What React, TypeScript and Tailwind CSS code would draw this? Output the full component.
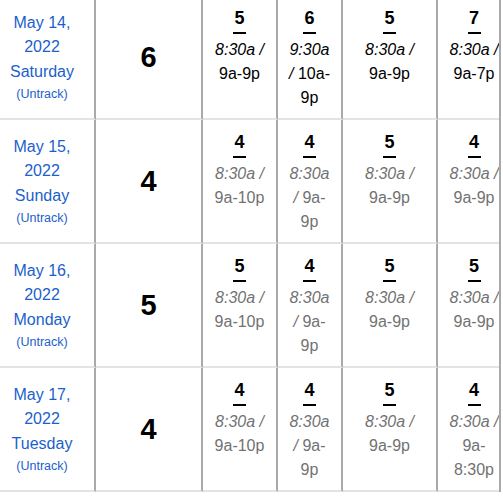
type Slot = { n: number; start: string; hours: string };

type Row = { date: string; year: string; day: string; count: number; slots: Slot[] };

const rows: Row[] = [
  {
    date: "May 14,",
    year: "2022",
    day: "Saturday",
    count: 6,
    slots: [
      { n: 5, start: "8:30a /", hours: "9a-9p" },
      { n: 6, start: "9:30a /", hours: "10a-9p" },
      { n: 5, start: "8:30a /", hours: "9a-9p" },
      { n: 7, start: "8:30a /", hours: "9a-7p" },
    ],
  },
  {
    date: "May 15,",
    year: "2022",
    day: "Sunday",
    count: 4,
    slots: [
      { n: 4, start: "8:30a /", hours: "9a-10p" },
      { n: 4, start: "8:30a /", hours: "9a-9p" },
      { n: 5, start: "8:30a /", hours: "9a-9p" },
      { n: 4, start: "8:30a /", hours: "9a-9p" },
    ],
  },
  {
    date: "May 16,",
    year: "2022",
    day: "Monday",
    count: 5,
    slots: [
      { n: 5, start: "8:30a /", hours: "9a-10p" },
      { n: 4, start: "8:30a /", hours: "9a-9p" },
      { n: 5, start: "8:30a /", hours: "9a-9p" },
      { n: 5, start: "8:30a /", hours: "9a-9p" },
    ],
  },
  {
    date: "May 17,",
    year: "2022",
    day: "Tuesday",
    count: 4,
    slots: [
      { n: 4, start: "8:30a /", hours: "9a-10p" },
      { n: 4, start: "8:30a /", hours: "9a-9p" },
      { n: 5, start: "8:30a /", hours: "9a-9p" },
      { n: 4, start: "8:30a /", hours: "9a-8:30p" },
    ],
  },
];

// widths of the four day columns (incl. right border)
const dayCols = ["w-[75px]", "w-[65px]", "w-[95px]", "w-[74px]"];

const SlotCell = ({ slot, width, muted }: { slot: Slot; width: string; muted: boolean }) => (
  <div
    className={`${width} shrink-0 border-r-2 border-b-2 border-r-[#a9a9a9] border-b-[#e3e3e3] px-2.5 pt-[11px] text-center`}
  >
    <div className="text-[18px] font-bold leading-[22px] text-black">{slot.n}</div>
    <div className="mx-auto mt-[3px] h-[1.5px] w-[13px] bg-black"></div>
    <div className={`mt-[4px] text-[16px] leading-[24px] ${muted ? "text-[#727272]" : "text-black"}`}>
      <i>{slot.start}</i> {slot.hours}
    </div>
  </div>
);

export default function App() {
  return (
    <div className="h-[500px] w-[503px] overflow-hidden bg-white font-['Liberation_Sans',Arial,sans-serif]">
      <div className="-mt-1 w-[501px] overflow-hidden border-r-2 border-r-[#a9a9a9]">
        {rows.map((row, i) => (
          <div key={row.date} className="flex h-[124px]">
            <div className="flex w-[96px] shrink-0 flex-col items-center justify-center border-r-2 border-b-2 border-r-[#a9a9a9] border-b-[#e3e3e3] pr-[10px] text-center text-[#1b5fcc]">
              <div className="text-[16px] leading-[24.5px]">{row.date}</div>
              <div className="text-[16px] leading-[24.5px]">{row.year}</div>
              <div className="text-[16px] leading-[24.5px]">{row.day}</div>
              <div className="mt-[1px] text-[12.5px] leading-[18px]">(Untrack)</div>
            </div>
            <div className="flex w-[107px] shrink-0 items-center justify-center border-r-2 border-b-2 border-r-[#a9a9a9] border-b-[#e3e3e3] pt-[1px]">
              <span className="text-[29px] font-bold leading-[29px] text-black">{row.count}</span>
            </div>
            {row.slots.map((slot, j) => (
              <SlotCell key={j} slot={slot} width={dayCols[j]} muted={i > 0} />
            ))}
          </div>
        ))}
      </div>
    </div>
  );
}
